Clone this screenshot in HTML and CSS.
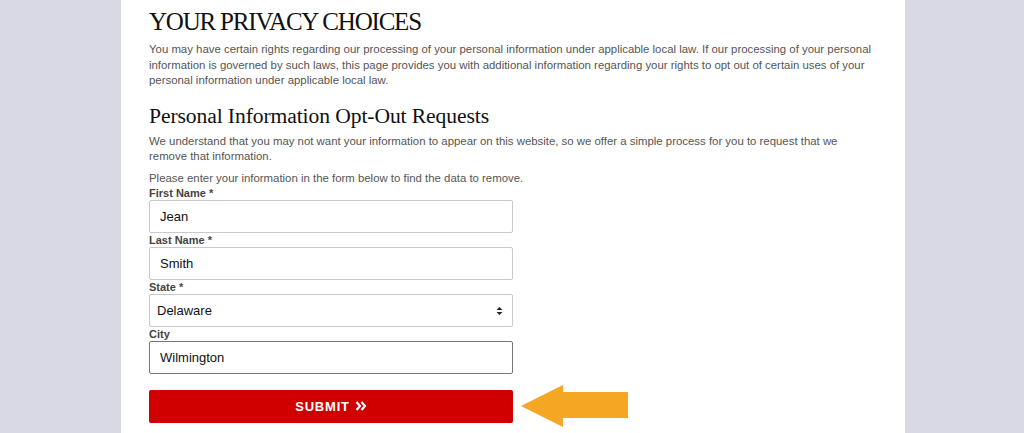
FILE: index.html
```html
<!DOCTYPE html>
<html lang="en">
<head>
<meta charset="utf-8">
<title>Your Privacy Choices</title>
<link rel="stylesheet" href="styles.css">
</head>
<body>
<main class="panel">
  <h1 class="title">YOUR PRIVACY CHOICES</h1>
  <p class="text">You may have certain rights regarding our processing of your personal information under applicable local law. If our processing of your personal information is governed by such laws, this page provides you with additional information regarding your rights to opt out of certain uses of your personal information under applicable local law.</p>
  <h2 class="subtitle">Personal Information Opt-Out Requests</h2>
  <p class="text">We understand that you may not want your information to appear on this website, so we offer a simple process for you to request that we remove that information.</p>
  <p class="text text-tight">Please enter your information in the form below to find the data to remove.</p>
  <form class="form">
    <label class="label" for="fn">First Name *</label>
    <input class="field" id="fn" type="text" value="Jean">
    <label class="label" for="ln">Last Name *</label>
    <input class="field" id="ln" type="text" value="Smith">
    <label class="label" for="st">State *</label>
    <div class="select">
      <span class="select-value">Delaware</span>
      <svg class="select-arrows" width="7" height="10" viewBox="0 0 7 10"><path d="M3.5 1 L6.5 4 H0.5 Z M3.5 9 L6.5 6 H0.5 Z" fill="#222"/></svg>
    </div>
    <label class="label" for="ct">City</label>
    <input class="field field-active" id="ct" type="text" value="Wilmington">
    <div class="submit-row">
      <button class="submit" type="button"><span>SUBMIT</span><svg class="chev" width="12" height="10" viewBox="0 0 12 10"><path d="M1.5 1 L5 5 L1.5 9 M6.5 1 L10 5 L6.5 9" fill="none" stroke="#fff" stroke-width="2.2" stroke-linejoin="miter"/></svg></button>
      <svg class="pointer" width="108" height="44" viewBox="0 0 108 44"><path d="M0 22 L42 1 L42 8 L107 8 L107 34 L42 34 L42 43 Z" fill="#f5a623"/></svg>
    </div>
  </form>
</main>
</body>
</html>
```
FILE: styles.css
```css
html, body {
  margin: 0;
  padding: 0;
  background: #d9d9e5;
  height: 100%;
}
body {
  font-family: "Liberation Sans", Arial, sans-serif;
  overflow: hidden;
}
.panel {
  width: 728px;
  margin-left: 121px;
  padding: 0 28px 20px;
  background: #fff;
  min-height: 433px;
  box-sizing: content-box;
}
.title {
  margin: 0;
  padding-top: 7px;
  font-family: "Liberation Serif", "Times New Roman", serif;
  font-weight: 400;
  font-size: 25px;
  line-height: 29px;
  color: #111;
  letter-spacing: -1.2px;
}
.text {
  margin: 6px 0 0;
  font-size: 11.4px;
  line-height: 15.5px;
  color: #555;
}
.subtitle {
  margin: 14px 0 0;
  font-family: "Liberation Serif", "Times New Roman", serif;
  font-weight: 400;
  font-size: 21.6px;
  line-height: 26px;
  color: #111;
  letter-spacing: -0.1px;
}
.subtitle + .text { margin-top: 5px; }
.text-tight { margin-top: 6px; }
.form {
  display: flex;
  flex-direction: column;
  width: 364px;
}
.label {
  font-size: 11px;
  font-weight: 700;
  color: #444;
  line-height: 14px;
}
.field, .select {
  box-sizing: border-box;
  height: 33px;
  width: 364px;
  border: 1px solid #c9c9c9;
  border-radius: 2px;
  padding: 0 10px;
  font-family: "Liberation Sans", Arial, sans-serif;
  font-size: 13px;
  color: #111;
  background: #fff;
  margin: 0;
}
.field-active { border-color: #777; }
.select {
  display: flex;
  align-items: center;
  justify-content: space-between;
  padding: 0 9px 0 7px;
}
.submit-row {
  display: flex;
  align-items: center;
  gap: 8px;
  margin-top: 10px;
  width: 500px;
}
.submit {
  flex: 0 0 364px;
  height: 33px;
  border: none;
  border-radius: 2px;
  background: #d10000;
  color: #fff;
  font-family: "Liberation Sans", Arial, sans-serif;
  font-weight: 700;
  font-size: 13px;
  letter-spacing: 0.8px;
  cursor: pointer;
  display: flex;
  align-items: center;
  justify-content: center;
  gap: 5px;
}
.chev { display: block; }
.pointer { display: block; }
```
